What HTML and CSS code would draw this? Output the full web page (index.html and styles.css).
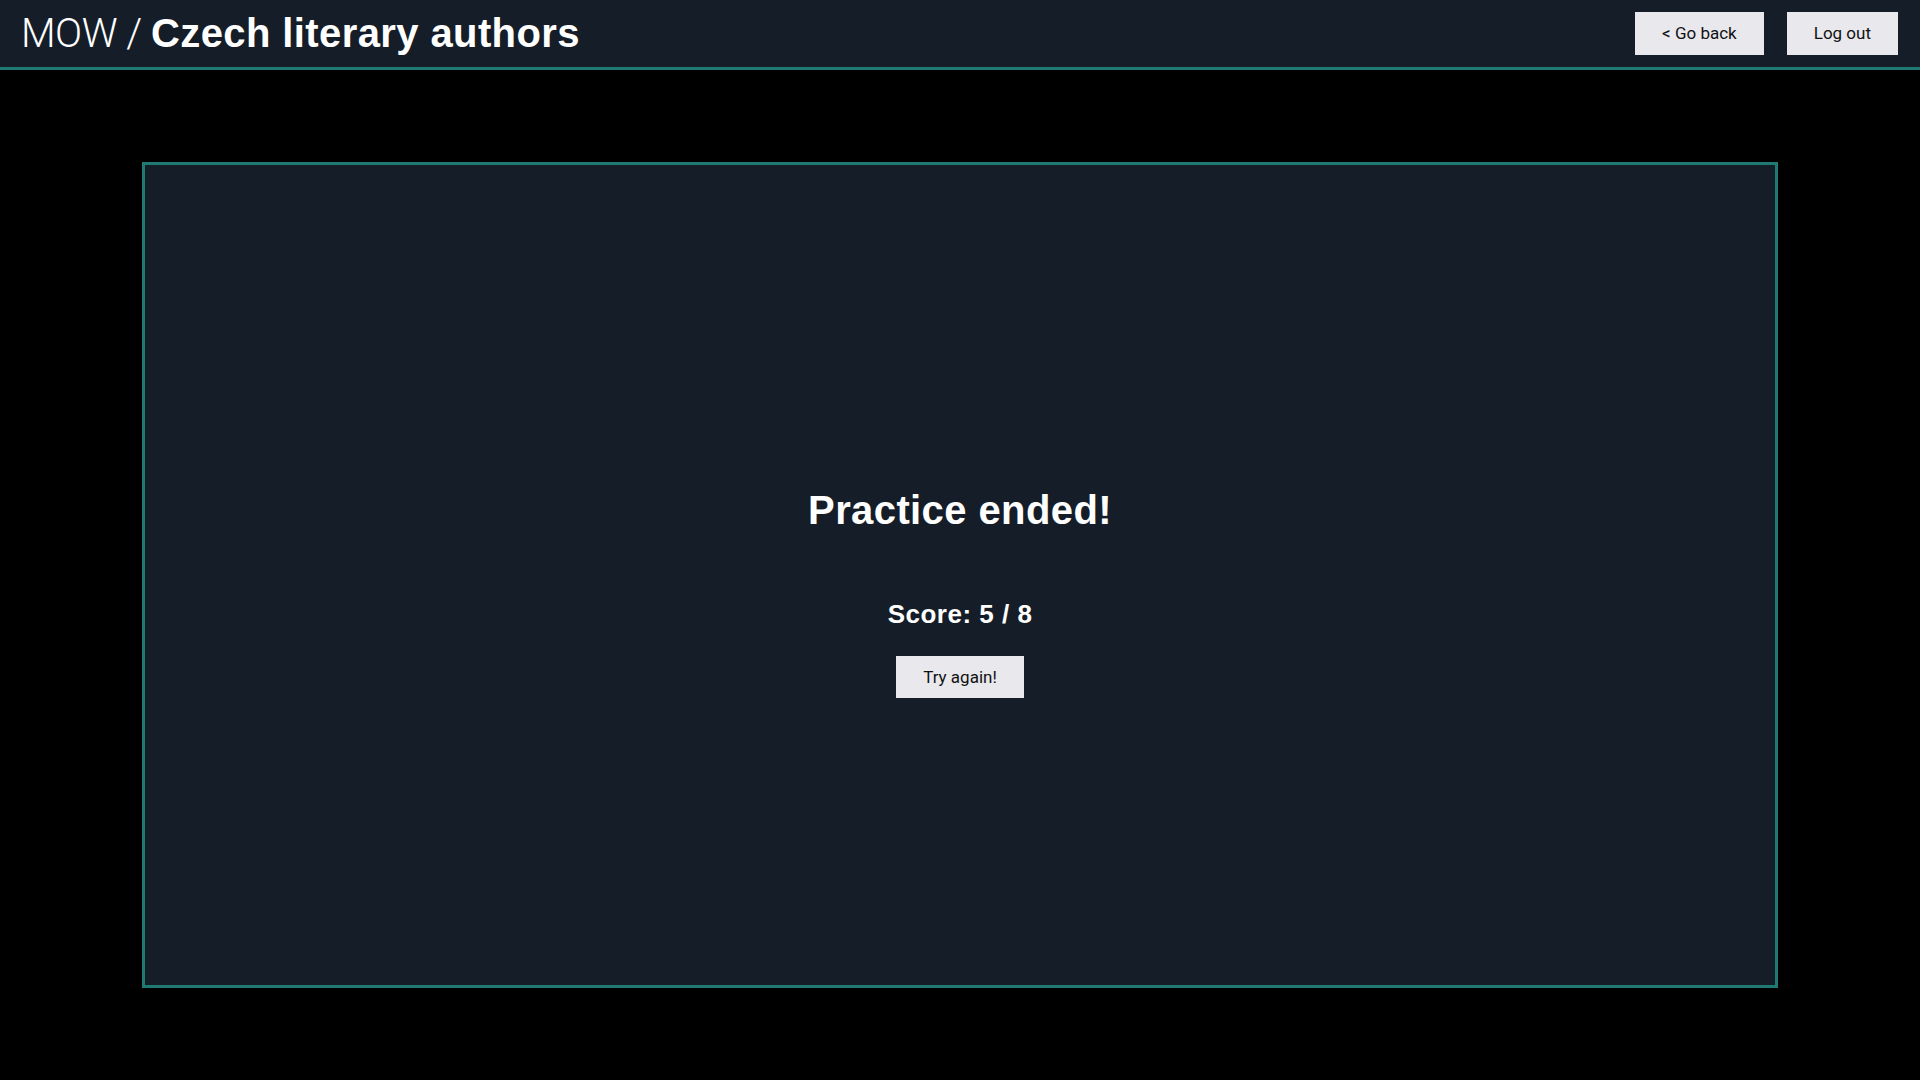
FILE: index.html
```html
<!DOCTYPE html>
<html lang="en">
<head>
<meta charset="utf-8">
<title>MOW / Czech literary authors</title>
<link rel="stylesheet" href="styles.css">
</head>
<body>
<header class="topbar">
  <h1 class="title"><span class="brand">MOW / </span><span class="deck">Czech literary authors</span></h1>
  <nav class="actions">
    <button class="btn">&lt; Go back</button>
    <button class="btn">Log out</button>
  </nav>
</header>
<main class="stage">
  <section class="card">
    <h2 class="heading">Practice ended!</h2>
    <p class="score">Score: 5 / 8</p>
    <button class="btn">Try again!</button>
  </section>
</main>
</body>
</html>
```

FILE: styles.css
```css
* { box-sizing: border-box; }
html, body { margin: 0; padding: 0; }
body {
  background: #000;
  color: #fff;
  font-family: "Liberation Sans", Arial, sans-serif;
  height: 1080px;
  display: flex;
  flex-direction: column;
}
.topbar {
  height: 70px;
  background: #151e28;
  border-bottom: 3px solid #1f7a74;
  display: flex;
  align-items: center;
  justify-content: space-between;
  padding: 0 22px 0 21px;
  flex: none;
}
.title {
  margin: 0;
  font-size: 40px;
  line-height: 1;
  font-weight: 400;
  padding-bottom: 1px;
}
.brand {
  font-family: Roboto, "Liberation Sans", sans-serif;
  font-weight: 300;
  letter-spacing: -0.5px;
}
.deck {
  font-weight: 700;
  letter-spacing: 0.4px;
}
.actions {
  display: flex;
  gap: 23px;
  padding-bottom: 1px;
}
.btn {
  font-family: Roboto, "Liberation Sans", sans-serif;
  font-size: 17px;
  color: #111;
  background: #e8e8ed;
  border: none;
  border-radius: 0;
  height: 43px;
  padding: 0 27px;
  cursor: pointer;
}
.stage {
  flex: 1;
  display: flex;
  align-items: center;
  justify-content: center;
}
.card {
  width: 1636px;
  height: 826px;
  background: #151e28;
  border: 3px solid #1f7a74;
  display: flex;
  flex-direction: column;
  align-items: center;
  justify-content: center;
  padding-top: 34px;
}
.heading {
  margin: 0;
  font-size: 40px;
  font-weight: 700;
  line-height: 48px;
  letter-spacing: 0.4px;
}
.score {
  margin: 64px 0 26px;
  font-size: 26px;
  font-weight: 700;
  line-height: 32px;
  letter-spacing: 0.5px;
}
.card .btn { height: 42px; }
```
